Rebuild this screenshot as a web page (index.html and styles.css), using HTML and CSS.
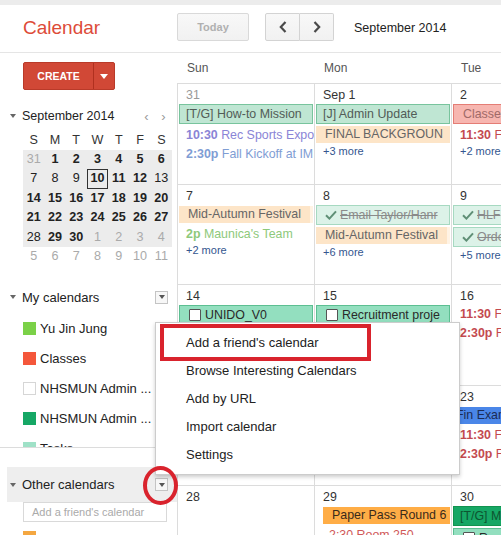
FILE: index.html
```html
<!DOCTYPE html>
<html>
<head>
<meta charset="utf-8">
<title>Calendar</title>
<link rel="stylesheet" href="styles.css">
</head>
<body>
<div class="topstrip"></div>
<header class="appbar">
  <div class="logo">Calendar</div>
  <div class="toolbar">
    <button class="btn today">Today</button>
    <div class="navgroup">
      <button class="btn nav nav-prev"><svg width="8" height="12" viewBox="0 0 8 12"><path d="M6.5 1 L1.8 6 L6.5 11" fill="none" stroke="#4a4a4a" stroke-width="2.2"/></svg></button>
      <button class="btn nav nav-next"><svg width="8" height="12" viewBox="0 0 8 12"><path d="M1.5 1 L6.2 6 L1.5 11" fill="none" stroke="#4a4a4a" stroke-width="2.2"/></svg></button>
    </div>
    <div class="period">September 2014</div>
  </div>
</header>
<div class="body">
  <aside class="sidebar">
    <div class="create-row">
      <div class="create"><span class="create-label">CREATE</span><span class="create-arrow"><span class="tri-white"></span></span></div>
    </div>
    <div class="mc-head"><span class="tri"></span><span class="mc-title">September 2014</span><span class="mc-nav">&#8249;</span><span class="mc-nav">&#8250;</span></div>
    <div class="mc-row mc-letters"><span>S</span><span>M</span><span>T</span><span>W</span><span>T</span><span>F</span><span>S</span></div>
    <div class="mc-weeks">
      <div class="mc-row"><span class="o">31</span><span class="b">1</span><span class="b">2</span><span class="b">3</span><span class="b">4</span><span class="b">5</span><span class="b">6</span></div>
      <div class="mc-row"><span>7</span><span>8</span><span>9</span><span class="b now">10</span><span class="b">11</span><span class="b">12</span><span>13</span></div>
      <div class="mc-row"><span class="b">14</span><span class="b">15</span><span class="b">16</span><span class="b">17</span><span class="b">18</span><span class="b">19</span><span class="b">20</span></div>
      <div class="mc-row"><span class="b">21</span><span class="b">22</span><span class="b">23</span><span class="b">24</span><span class="b">25</span><span class="b">26</span><span class="b">27</span></div>
      <div class="mc-row"><span>28</span><span class="b">29</span><span class="b">30</span><span class="o">1</span><span class="o">2</span><span class="o">3</span><span class="o">4</span></div>
    </div>
    <div class="mc-row mc-after"><span class="o">5</span><span class="o">6</span><span class="o">7</span><span class="o">8</span><span class="o">9</span><span class="o">10</span><span class="o">11</span></div>

    <div class="sec-head"><span class="tri"></span><span class="sec-title">My calendars</span><span class="dd"><span class="tri-dark"></span></span></div>
    <div class="cal-list">
      <div class="cal-item"><span class="sw green"></span>Yu Jin Jung</div>
      <div class="cal-item"><span class="sw red"></span>Classes</div>
      <div class="cal-item"><span class="sw empty"></span>NHSMUN Admin ...</div>
      <div class="cal-item"><span class="sw dgreen"></span>NHSMUN Admin ...</div>
      <div class="cal-item"><span class="sw teal"></span>Tasks</div>
    </div>
    <div class="other-head"><span class="tri"></span><span class="sec-title">Other calendars</span><span class="dd"><span class="tri-dark"></span></span></div>
    <div class="friend">Add a friend's calendar</div>
    <div class="other-list">
      <div class="cal-item"><span class="sw orange"></span></div>
    </div>
  </aside>

  <main class="month">
    <div class="dow">Sun</div>
    <div class="dow">Mon</div>
    <div class="dow">Tue</div>

    <div class="cell">
      <div class="date muted">31</div>
      <div class="ev mint">[T/G] How-to Mission</div>
      <div class="tev purple"><b>10:30</b> Rec Sports Expo</div>
      <div class="tev blue"><b>2:30p</b> Fall Kickoff at IM Field</div>
    </div>
    <div class="cell">
      <div class="date">Sep 1</div>
      <div class="ev mint">[J] Admin Update</div>
      <div class="fev peach">FINAL BACKGROUN</div>
      <div class="more">+3 more</div>
    </div>
    <div class="cell">
      <div class="date">2</div>
      <div class="ev pink">Classes</div>
      <div class="tev red"><b>11:30</b> Finance</div>
      <div class="more">+2 more</div>
    </div>

    <div class="cell">
      <div class="date">7</div>
      <div class="fev peach edge">Mid-Autumn Festival</div>
      <div class="tev lgreen"><b>2p</b> Maunica's Team</div>
      <div class="more">+2 more</div>
    </div>
    <div class="cell">
      <div class="date">8</div>
      <div class="ev pale"><svg class="chk" width="12" height="10" viewBox="0 0 12 10"><path d="M1 5.2 L4.4 8.6 L11 1.4" fill="none" stroke="#5f8f76" stroke-width="2"/></svg><s>Email Taylor/Hanr</s></div>
      <div class="fev peach edge">Mid-Autumn Festival</div>
      <div class="more">+6 more</div>
    </div>
    <div class="cell">
      <div class="date">9</div>
      <div class="ev pale"><svg class="chk" width="12" height="10" viewBox="0 0 12 10"><path d="M1 5.2 L4.4 8.6 L11 1.4" fill="none" stroke="#5f8f76" stroke-width="2"/></svg><s>HLF</s></div>
      <div class="ev pale"><svg class="chk" width="12" height="10" viewBox="0 0 12 10"><path d="M1 5.2 L4.4 8.6 L11 1.4" fill="none" stroke="#5f8f76" stroke-width="2"/></svg><s>Order</s></div>
      <div class="more">+5 more</div>
    </div>

    <div class="cell">
      <div class="date">14</div>
      <div class="ev task"><span class="cb"></span>UNIDO_V0</div>
    </div>
    <div class="cell">
      <div class="date">15</div>
      <div class="ev task"><span class="cb"></span>Recruitment proje</div>
    </div>
    <div class="cell">
      <div class="date">16</div>
      <div class="tev red"><b>11:30</b> Finance</div>
      <div class="tev red"><b>2:30p</b> Finance</div>
    </div>

    <div class="cell"></div>
    <div class="cell"></div>
    <div class="cell">
      <div class="date">23</div>
      <div class="fev bluebar">Fin Exam</div>
      <div class="tev red"><b>11:30</b> Finance</div>
      <div class="tev red"><b>2:30p</b> Finance</div>
    </div>

    <div class="cell">
      <div class="date">28</div>
    </div>
    <div class="cell">
      <div class="date">29</div>
      <div class="fev orangebar">Paper Pass Round 6</div>
      <div class="tev red2">2:30 Room 250</div>
    </div>
    <div class="cell">
      <div class="date">30</div>
      <div class="ev dgreenbar">[T/G] Meeting</div>
      <div class="ev task"><span class="cb"></span>Review</div>
    </div>
  </main>
</div>

<div class="menu">
  <div class="menu-item">Add a friend's calendar</div>
  <div class="menu-item">Browse Interesting Calendars</div>
  <div class="menu-item">Add by URL</div>
  <div class="menu-item">Import calendar</div>
  <div class="menu-item">Settings</div>
</div>
<div class="mark-rect"></div>
<div class="mark-circle"></div>
</body>
</html>
```
FILE: styles.css
```css
* { box-sizing: border-box; }
html, body { margin: 0; padding: 0; }
body {
  width: 501px;
  height: 535px;
  overflow: hidden;
  position: relative;
  background: #fff;
  font-family: "Liberation Sans", Arial, sans-serif;
  color: #222;
}

.topstrip { height: 5px; background: #ececec; }

.appbar {
  height: 48px;
  border-bottom: 1px solid #e5e5e5;
  display: flex;
}
.logo {
  width: 177px;
  flex: none;
  padding-left: 23px;
  font-size: 19px;
  line-height: 46px;
  color: #dd4b39;
}
.toolbar {
  display: flex;
  align-items: flex-start;
  padding-top: 8px;
}
.btn {
  height: 28px;
  border: 1px solid #d9d9d9;
  background: linear-gradient(#f8f8f8, #f1f1f1);
  border-radius: 2px;
  padding: 0;
  margin: 0;
  font-family: "Liberation Sans", Arial, sans-serif;
  display: flex;
  align-items: center;
  justify-content: center;
}
.today {
  width: 72px;
  font-size: 11px;
  font-weight: bold;
  color: #b0b0b0;
}
.navgroup { display: flex; margin-left: 16px; }
.nav { width: 35px; border-color: #d3d3d3; }
.nav-prev { border-radius: 2px 0 0 2px; }
.nav-next { width: 34px; border-left: none; border-radius: 0 2px 2px 0; }
.period {
  margin-left: 20px;
  font-size: 12.5px;
  line-height: 30px;
  color: #222;
}

.body { display: flex; height: 482px; }

/* sidebar */
.sidebar { width: 177px; flex: none; }
.create-row { margin-top: 9px; padding-left: 23px; }
.create {
  width: 92px;
  height: 28px;
  display: flex;
  background: #d14836;
  border: 1px solid #b93a29;
  border-radius: 2px;
  color: #fff;
}
.create-label {
  width: 70px;
  text-align: center;
  font-size: 10.5px;
  font-weight: bold;
  line-height: 26px;
  border-right: 1px solid #b0301f;
}
.create-arrow { flex: 1; display: flex; align-items: center; justify-content: center; }
.tri-white {
  width: 0; height: 0;
  border-left: 4px solid transparent;
  border-right: 4px solid transparent;
  border-top: 5px solid #fff;
}
.tri {
  width: 0; height: 0;
  border-left: 3.5px solid transparent;
  border-right: 3.5px solid transparent;
  border-top: 4px solid #666;
  margin-right: 6px;
  flex: none;
}
.tri-dark {
  width: 0; height: 0;
  border-left: 3px solid transparent;
  border-right: 3px solid transparent;
  border-top: 4px solid #555;
}

.mc-head {
  margin-top: 18px;
  height: 16px;
  display: flex;
  align-items: center;
  padding-left: 10px;
  padding-right: 5px;
}
.mc-title { font-size: 12.5px; color: #222; }
.mc-nav {
  width: 17px;
  text-align: center;
  font-size: 13px;
  color: #999;
}
.mc-head .mc-nav:nth-of-type(3) { margin-left: auto; }

.mc-row {
  margin-left: 23px;
  width: 149px;
  display: grid;
  grid-template-columns: repeat(7, 1fr);
  height: 19.4px;
  font-size: 12.6px;
  line-height: 19.4px;
  text-align: center;
  color: #222;
}
.mc-letters { margin-top: 6px; height: 20px; line-height: 20px; color: #333; }
.mc-weeks { margin-left: 23px; width: 149px; background: #ececec; }
.mc-weeks .mc-row { margin-left: 0; }
.mc-row .b { font-weight: bold; }
.mc-row .o { color: #aaa; }
.mc-row .now { border: 1px solid #333; line-height: 17.4px; }

.sec-head {
  margin-top: 21px;
  height: 20px;
  display: flex;
  align-items: center;
  padding-left: 10px;
}
.sec-title { font-size: 13px; color: #222; }
.dd {
  margin-left: auto;
  margin-right: 9px;
  width: 13px;
  height: 13px;
  border: 1px solid #c4c4c4;
  background: #f7f7f7;
  display: flex;
  align-items: center;
  justify-content: center;
}

.cal-list {
  margin-top: 6px;
  height: 135px;
  overflow: hidden;
  border-bottom: 1px solid #dcdcdc;
}
.cal-item {
  height: 30px;
  display: flex;
  align-items: center;
  padding-left: 23px;
  font-size: 13px;
  color: #222;
  white-space: nowrap;
}
.sw { width: 13px; height: 13px; margin-right: 4px; flex: none; }
.sw.green { background: #7bd148; }
.sw.red { background: #f4573b; }
.sw.empty { background: #fff; border: 1px solid #d6d6d6; }
.sw.dgreen { background: #16a765; }
.sw.teal { background: #9fe1c7; }
.sw.orange { background: #f4a741; }

.other-head {
  margin-top: 19px;
  margin-left: 7px;
  height: 35px;
  background: #eeeeee;
  display: flex;
  align-items: center;
  padding-left: 3px;
}
.friend {
  margin-left: 23px;
  width: 144px;
  height: 20px;
  border: 1px solid #d9d9d9;
  font-size: 11px;
  line-height: 18px;
  padding-left: 8px;
  color: #aaa;
}
.other-list { margin-top: 9px; }
.other-list .cal-item { height: 14px; align-items: flex-start; }

/* month grid */
.month {
  flex: 1;
  overflow: hidden;
  display: grid;
  grid-template-columns: 137px 137px 137px;
  grid-template-rows: 30px 101px 100px 101px 100px 100px;
}
.dow {
  padding-left: 10px;
  font-size: 12px;
  line-height: 31px;
  color: #555;
}
.cell {
  border-left: 1px solid #dcdcdc;
  border-top: 1px solid #dcdcdc;
  padding-top: 3px;
  overflow: hidden;
  min-width: 0;
}
.date {
  font-size: 12.4px;
  line-height: 17px;
  height: 17px;
  padding-left: 8px;
  color: #333;
}
.date.muted { color: #999; }

.ev {
  margin: 0 1px 2px 1px;
  height: 20px;
  border: 1px solid;
  padding-left: 6px;
  font-size: 12.4px;
  line-height: 18px;
  white-space: nowrap;
  overflow: hidden;
  display: flex;
  align-items: center;
}
.fev {
  margin: 1px 1px 2px 1px;
  height: 17px;
  padding-left: 9px;
  font-size: 12.4px;
  line-height: 17px;
  white-space: nowrap;
  overflow: hidden;
}
.tev {
  height: 19px;
  line-height: 19px;
  padding-left: 8px;
  font-size: 12.4px;
  white-space: nowrap;
  overflow: hidden;
}
.more {
  height: 12px;
  line-height: 12px;
  padding-left: 8px;
  font-size: 11px;
  color: #34568f;
}

.mint { background: #bfe6d3; border-color: #78c49d; color: #525c57; }
.pale { background: #dcf2e8; border-color: #a6d9c1; color: #8a8a8a; padding-left: 8px; }
.pale s { text-decoration: line-through; }
.chk { margin-right: 3px; flex: none; }
.task { background: #93dfbf; border-color: #5cbf92; color: #2a2a2a; padding-left: 9px; }
.cb {
  width: 12px; height: 12px;
  border: 1px solid #555;
  border-radius: 1px;
  background: #fff;
  margin-right: 4px;
  flex: none;
}
.pink { background: #f7b6b0; border-color: #e47d75; color: #a06a68; padding-left: 9px; }
.peach { background: #fde5c8; color: #666; }
.peach.edge { box-shadow: inset -3px 0 0 #fff3e4; }
.bluebar { background: #4a86e8; color: #1b2b55; padding-left: 3px; }
.orangebar { background: #ffad46; color: #3a2a1a; margin-left: 8px; padding-left: 9px; }
.dgreenbar { background: #16a765; border-color: #11934f; color: #0d5530; padding-left: 6px; }

.purple { color: #8a84d6; }
.blue { color: #7f9dd4; }
.lgreen { color: #8ec97b; }
.red { color: #c44a4f; }
.red2 { color: #d05858; padding-left: 14px; }
.tev b { font-weight: bold; }

/* dropdown menu overlay */
.menu {
  position: absolute;
  left: 155px;
  top: 322px;
  width: 305px;
  height: 153px;
  background: #fff;
  border: 1px solid rgba(0,0,0,0.2);
  box-shadow: 0 2px 4px rgba(0,0,0,0.2);
  padding-top: 6px;
}
.menu-item {
  height: 28px;
  line-height: 28px;
  padding-left: 30px;
  font-size: 13px;
  color: #222;
}

/* annotations */
.mark-rect {
  position: absolute;
  left: 160px;
  top: 324px;
  width: 211px;
  height: 37px;
  border: 4px solid #d9232d;
}
.mark-circle {
  position: absolute;
  left: 143px;
  top: 466px;
  width: 35px;
  height: 39px;
  border: 4px solid #d9232d;
  border-radius: 50%;
}
```
